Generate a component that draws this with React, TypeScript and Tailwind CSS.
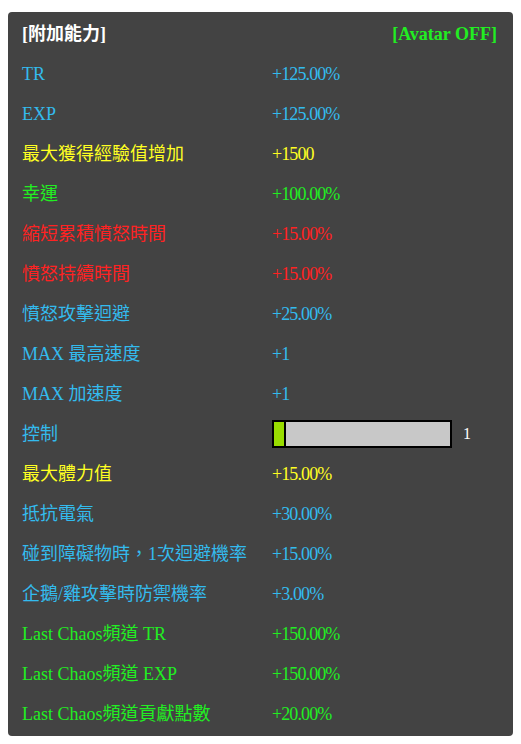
const BLUE = 'text-[#33bbee]';
const YELLOW = 'text-[#ffff22]';
const GREEN = 'text-[#22ee22]';
const RED = 'text-[#ff2222]';

type Row = { label: string; value?: string; color: string; bar?: number };

const rows: Row[] = [
  { label: 'TR', value: '+125.00%', color: BLUE },
  { label: 'EXP', value: '+125.00%', color: BLUE },
  { label: '最大獲得經驗值增加', value: '+1500', color: YELLOW },
  { label: '幸運', value: '+100.00%', color: GREEN },
  { label: '縮短累積憤怒時間', value: '+15.00%', color: RED },
  { label: '憤怒持續時間', value: '+15.00%', color: RED },
  { label: '憤怒攻擊迴避', value: '+25.00%', color: BLUE },
  { label: 'MAX 最高速度', value: '+1', color: BLUE },
  { label: 'MAX 加速度', value: '+1', color: BLUE },
  { label: '控制', color: BLUE, bar: 1 },
  { label: '最大體力值', value: '+15.00%', color: YELLOW },
  { label: '抵抗電氣', value: '+30.00%', color: BLUE },
  { label: '碰到障礙物時，1次迴避機率', value: '+15.00%', color: BLUE },
  { label: '企鵝/雞攻擊時防禦機率', value: '+3.00%', color: BLUE },
  { label: 'Last Chaos頻道 TR', value: '+150.00%', color: GREEN },
  { label: 'Last Chaos頻道 EXP', value: '+150.00%', color: GREEN },
  { label: 'Last Chaos頻道貢獻點數', value: '+20.00%', color: GREEN },
];

function LevelBar({ level }: { level: number }) {
  return (
    <div className="flex items-center">
      <div className="flex h-[28px] w-[180px] border-2 border-black bg-black">
        <div className="bg-[#99dd00]" style={{ width: level * 10 }} />
        <div className="ml-[2px] flex-1 bg-[#c8c8c8]" />
      </div>
      <span className="ml-[11px] text-[16px] text-white">{level}</span>
    </div>
  );
}

export default function App() {
  return (
    <div
      className="min-h-screen bg-white px-[8px] pt-[12px]"
      style={{ fontFamily: '"Liberation Serif", "Noto Sans CJK TC", serif' }}
    >
      <div className="rounded-[4px] bg-[#434343] pt-[2px] pb-[2px] pl-[14px] pr-[16px] text-[18px] leading-none">
        {/* Header */}
        <div className="flex h-[40px] items-center justify-between font-bold">
          <span className="text-white">[附加能力]</span>
          <span className="text-[#22ee22]">[Avatar OFF]</span>
        </div>

        {rows.map((row) => (
          <div key={row.label} className={`flex h-[40px] items-center ${row.color}`}>
            <span className="w-[250px] shrink-0 whitespace-nowrap">{row.label}</span>
            {row.bar !== undefined ? (
              <LevelBar level={row.bar} />
            ) : (
              <span className="tracking-[-0.05em]">{row.value}</span>
            )}
          </div>
        ))}
      </div>
    </div>
  );
}
